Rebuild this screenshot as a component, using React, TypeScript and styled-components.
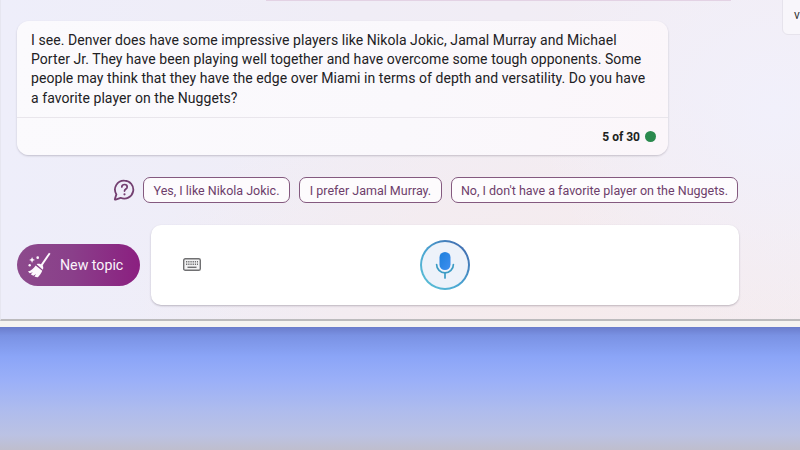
import React from "react";
import styled, { createGlobalStyle } from "styled-components";

const Global = createGlobalStyle`
  html, body { margin: 0; padding: 0; width: 800px; height: 450px; overflow: hidden; }
  #root { width: 800px; height: 450px; }
  * { box-sizing: border-box; }
`;

const Page = styled.div`
  width: 800px;
  height: 450px;
  display: flex;
  flex-direction: column;
  font-family: Roboto, "Liberation Sans", sans-serif;
  overflow: hidden;
`;

const Panel = styled.main`
  position: relative;
  height: 321px;
  flex: none;
  padding: 0 0 0 17px;
  background:
    radial-gradient(ellipse 240px 220px at 775px 110px, #f1f0fb 0%, rgba(241, 240, 251, 0) 100%),
    radial-gradient(ellipse 430px 220px at 560px 300px, #f6ebec 0%, rgba(246, 235, 236, 0) 100%),
    linear-gradient(90deg, #eeeefa 0%, #f0edf6 45%, #f3edf3 100%);
  border-bottom: 2px solid #bcbbbd;
  border-left: 1px solid #e6e6f0;
`;

const PrevBubbleEdge = styled.div`
  height: 1px;
  width: 465px;
  margin-left: 248px;
  background: #e3d2e4;
`;

const SideCard = styled.aside`
  position: absolute;
  top: -6px;
  right: -20px;
  width: 38px;
  height: 41px;
  padding: 13px 0 0 11px;
  background: #f8f6fb;
  border: 1px solid #e6e3ec;
  border-radius: 6px;
  font-size: 12px;
  line-height: 14px;
  color: #333;
`;

const MessageCard = styled.article`
  width: 651px;
  height: 134px;
  margin-top: 20px;
  margin-left: -1px;
  background: linear-gradient(100deg, #fbfafd 0%, #faf8fc 60%, #fbf6fa 100%);
  border-radius: 12px;
  box-shadow: 0 1px 2px rgba(60, 50, 70, 0.25);
  display: flex;
  flex-direction: column;
`;

const MessageText = styled.p`
  margin: 0;
  height: 96px;
  padding: 9.5px 14px 0;
  font-size: 14px;
  line-height: 19.4px;
  color: #222124;
  letter-spacing: 0.065px;
`;

const MessageFooter = styled.footer`
  flex: 1;
  border-top: 1px solid #e9e6ec;
  display: flex;
  align-items: center;
  justify-content: flex-end;
  gap: 5px;
  padding: 0 12px 0 0;
`;

const Counter = styled.span`
  font-size: 12px;
  font-weight: 700;
  color: #201f21;
`;

const StatusDot = styled.span`
  width: 11px;
  height: 11px;
  border-radius: 50%;
  background: #2a8a4e;
`;

const SuggestionRow = styled.section`
  display: flex;
  align-items: center;
  margin-top: 22px;
  margin-left: 95px;
  height: 26px;
`;

const HelpIcon = styled.svg`
  width: 22px;
  height: 22px;
  flex: none;
  margin-right: 8px;
`;

const Chip = styled.button<{ $w: number }>`
  width: ${(p) => p.$w}px;
  height: 26px;
  padding: 0;
  margin-right: 9px;
  flex: none;
  background: #fdfbfd;
  border: 1.3px solid #84597f;
  border-radius: 7px;
  font-family: inherit;
  font-size: 12.5px;
  color: #6d3e6b;
  white-space: nowrap;
`;

const ComposerRow = styled.section`
  display: flex;
  align-items: center;
  margin-top: 22px;
  margin-left: -1px;
`;

const NewTopic = styled.button`
  width: 123px;
  height: 42px;
  flex: none;
  display: flex;
  align-items: center;
  gap: 9px;
  padding: 0 0 0 10px;
  border: none;
  border-radius: 21px;
  background: linear-gradient(90deg, #8c4a8c 0%, #8a3f8a 45%, #8b1f80 100%);
  color: #fbf4fb;
  font-family: inherit;
  font-size: 14.2px;
`;

const InputBox = styled.div`
  width: 588px;
  height: 80px;
  margin-left: 11px;
  position: relative;
  display: flex;
  align-items: center;
  padding-left: 32px;
  background: #ffffff;
  border-radius: 10px;
  box-shadow: 0 1px 2px rgba(60, 50, 70, 0.3);
`;

const KeyboardIcon = styled.svg`
  width: 18px;
  height: 13px;
  flex: none;
  margin-top: -2px;
`;

const MicButton = styled.div`
  margin-left: 219px;
  width: 50px;
  height: 50px;
  flex: none;
  border-radius: 50%;
  padding: 2px;
  background: linear-gradient(45deg, #5fc4d6 0%, #4aa5d2 45%, #3f5fa8 100%);
`;

const MicInner = styled.div`
  width: 100%;
  height: 100%;
  border-radius: 50%;
  background: #edf2fa;
  display: flex;
  align-items: center;
  justify-content: center;
`;

const Strip = styled.div`
  height: 6px;
  flex: none;
  background: #f5f3f1;
`;

const Sky = styled.div`
  flex: 1;
  background: linear-gradient(
    180deg,
    #6a7ccb 0%,
    #7a92e4 7%,
    #8ba5f7 24%,
    #9bb0f8 44%,
    #adbbee 66%,
    #bbc2e3 88%,
    #bfbecd 100%
  );
`;

export default function App() {
  return (
    <Page>
      <Global />
      <Panel>
        <PrevBubbleEdge />
        <SideCard>v</SideCard>
        <MessageCard>
          <MessageText>
            I see. Denver does have some impressive players like Nikola Jokic, Jamal Murray and Michael
            <br />
            Porter Jr. They have been playing well together and have overcome some tough opponents. Some
            <br />
            people may think that they have the edge over Miami in terms of depth and versatility. Do you have
            <br />
            a favorite player on the Nuggets?
          </MessageText>
          <MessageFooter>
            <Counter>5 of 30</Counter>
            <StatusDot />
          </MessageFooter>
        </MessageCard>
        <SuggestionRow>
          <HelpIcon viewBox="0 0 22 22" fill="none">
            <path
              d="M11.4 1.6a9 9 0 1 1-3.8 17.2L2.6 20.6c-.5.2-.9-.2-.7-.7l1.5-4.5A9 9 0 0 1 11.4 1.6Z"
              stroke="#733f70"
              strokeWidth="1.8"
              strokeLinejoin="round"
            />
            <path
              d="M8.8 8c0-1.5 1.2-2.5 2.7-2.5S14.2 6.5 14.2 7.9c0 2.1-2.7 2.1-2.7 4.2"
              stroke="#733f70"
              strokeWidth="1.7"
              strokeLinecap="round"
            />
            <circle cx="11.5" cy="15.3" r="1.1" fill="#733f70" />
          </HelpIcon>
          <Chip $w={147}>Yes, I like Nikola Jokic.</Chip>
          <Chip $w={143}>I prefer Jamal Murray.</Chip>
          <Chip $w={287}>No, I don't have a favorite player on the Nuggets.</Chip>
        </SuggestionRow>
        <ComposerRow>
          <NewTopic>
            <svg width="24" height="26" viewBox="0 0 22 24" fill="#fdf8fd">
              <path d="M20.2 0.6 12.3 12l1.5 1.1L21.6 1.6Z" />
              <path d="M8.8 11.3c1.9-.9 3.9-.2 5.2 1 1.2 1.2 1.1 2.6.5 4L8.8 11.3Z" />
              <path d="M7.9 12.4l6.1 4.9c-.8 2.1-2.4 4.4-4 5.9-1.1.1-2.1-.1-3.2-.5l1.5-2.3-2.5 1.6c-.9-.4-1.7-.9-2.4-1.4l1.9-1.8-2.9.8c-.6-.5-1.1-1-1.6-1.5 2.9-.9 5.4-2.9 7.1-5.7Z" />
              <path d="M4.6 4.5 5.4 6.5 7.3 7.3 5.4 8.1 4.6 10.1 3.8 8.1 1.9 7.3 3.8 6.5Z" />
              <circle cx="9.8" cy="5.2" r="1.2" />
              <circle cx="2.4" cy="12.2" r="1.1" />
            </svg>
            New topic
          </NewTopic>
          <InputBox>
            <KeyboardIcon viewBox="0 0 18 13" fill="none">
              <rect x="0.7" y="0.7" width="16.6" height="11.6" rx="1.6" fill="#f2f2f3" stroke="#707072" strokeWidth="1.4" />
              <path d="M3 3.8h12M3 6.2h12" stroke="#707072" strokeWidth="1.4" strokeDasharray="1.3 .9" />
              <path d="M4.5 9.3h9" stroke="#707072" strokeWidth="1.4" />
            </KeyboardIcon>
            <MicButton>
              <MicInner>
                <svg width="20" height="28" viewBox="0 0 20 28" fill="none">
                  <defs>
                    <linearGradient id="micBody" x1="0" y1="0" x2="1" y2="1">
                      <stop offset="0" stopColor="#1d7fdc" />
                      <stop offset="1" stopColor="#3f8ff0" />
                    </linearGradient>
                  </defs>
                  <rect x="4.5" y="1" width="11" height="18" rx="5.5" fill="url(#micBody)" />
                  <path d="M1.6 13.5a8.4 8.4 0 0 0 16.8 0" stroke="#3c9cc4" strokeWidth="1.7" strokeLinecap="round" />
                  <path d="M10 22v5" stroke="#3c9cc4" strokeWidth="1.7" strokeLinecap="round" />
                </svg>
              </MicInner>
            </MicButton>
          </InputBox>
        </ComposerRow>
      </Panel>
      <Strip />
      <Sky />
    </Page>
  );
}
